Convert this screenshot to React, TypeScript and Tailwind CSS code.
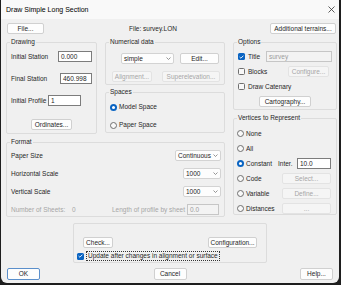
import React from 'react';

type Kids = { children?: React.ReactNode; className?: string };

function Btn({ children, className = '', disabled = false, isDefault = false }: Kids & { disabled?: boolean; isDefault?: boolean }) {
  return (
    <div
      className={`h-[11px] flex items-center justify-center rounded-[2px] border shrink-0 ${
        disabled
          ? 'bg-[#f5f5f5] border-[#e3e3e3] text-[#a6a6a6]'
          : isDefault
          ? 'bg-[#fdfdfd] border-[#5b8fcb] text-[#262626]'
          : 'bg-[#fdfdfd] border-[#d0d0d0] text-[#262626]'
      } ${className}`}
    >
      {children}
    </div>
  );
}

function Chevron() {
  return (
    <svg width="5" height="3" viewBox="0 0 5 3" className="shrink-0">
      <path d="M0.5 0.5 L2.5 2.5 L4.5 0.5" fill="none" stroke="#7a7a7a" strokeWidth="0.8" />
    </svg>
  );
}

function Select({ value, className = '' }: { value: string; className?: string }) {
  return (
    <div className={`h-[11px] flex items-center justify-between pl-[2px] pr-[2px] rounded-[2px] border border-[#d3d3d3] bg-[#fdfdfd] shrink-0 ${className}`}>
      <span className="whitespace-nowrap">{value}</span>
      <Chevron />
    </div>
  );
}

function Field({ value, className = '', disabled = false }: { value: string; className?: string; disabled?: boolean }) {
  return (
    <div
      className={`h-[11px] flex items-center pl-[2px] border shrink-0 ${
        disabled ? 'border-[#c6c6c6] bg-[#f3f3f3] text-[#9c9c9c]' : 'border-[#7c7c7c] bg-white text-[#262626]'
      } ${className}`}
    >
      {value}
    </div>
  );
}

function Check({ checked = false }: { checked?: boolean }) {
  if (checked) {
    return (
      <div className="w-[7px] h-[7px] rounded-[1.5px] bg-[#0a64c2] flex items-center justify-center shrink-0">
        <svg width="5" height="4" viewBox="0 0 5 4">
          <path d="M0.6 2 L1.9 3.2 L4.4 0.7" fill="none" stroke="white" strokeWidth="0.9" />
        </svg>
      </div>
    );
  }
  return <div className="w-[7px] h-[7px] rounded-[1.5px] border border-[#6f6f6f] bg-[#f8f8f8] shrink-0" />;
}

function Radio({ checked = false }: { checked?: boolean }) {
  if (checked) {
    return (
      <div className="w-[7px] h-[7px] rounded-full bg-[#0a64c2] flex items-center justify-center shrink-0">
        <div className="w-[3px] h-[3px] rounded-full bg-white" />
      </div>
    );
  }
  return <div className="w-[7px] h-[7px] rounded-full border border-[#6f6f6f] bg-[#f8f8f8] shrink-0" />;
}

function Group({ label, className = '', children }: Kids & { label: string }) {
  return (
    <fieldset className={`border border-[#dcdcdc] rounded-[2px] px-[4px] min-w-0 ${className}`}>
      <legend className="leading-[8px] px-[1px] -ml-[1px]">{label}</legend>
      {children}
    </fieldset>
  );
}

export default function App() {
  const vertices = ['None', 'All', 'Constant', 'Code', 'Variable', 'Distances'];

  return (
    <div className="w-[341px] h-[285px] bg-[#1e1e1e] flex font-['Liberation_Sans',Arial,sans-serif] text-[#262626]">
      <div className="w-[338px] h-[283px] ml-[1px] bg-[#f0f0f0] rounded-b-[6px] flex flex-col overflow-hidden text-[6.5px] leading-[8px]">
        {/* Title bar */}
        <div className="h-[19px] bg-[#f9f9f9] flex items-center justify-between pl-[5px] pr-[4px]">
          <span className="text-[7px] text-black">Draw Simple Long Section</span>
          <svg width="7" height="7" viewBox="0 0 7 7">
            <path d="M0.5 0.5 L6.5 6.5 M6.5 0.5 L0.5 6.5" stroke="#333" strokeWidth="0.8" />
          </svg>
        </div>

        {/* File row */}
        <div className="mt-[4px] flex items-center pl-[6px] pr-[3px]">
          <Btn className="w-[37px]">File...</Btn>
          <span className="ml-[85px]">File: survey.LON</span>
          <Btn className="w-[66px] ml-auto">Additional terrains...</Btn>
        </div>

        {/* Main area */}
        <div className="mt-[4px] flex gap-[8px] pl-[5px] pr-[2px]">
          {/* Left column */}
          <div className="w-[219px] flex flex-col">
            <div className="flex gap-[8px]">
              <Group label="Drawing" className="w-[91px] pb-[3px]">
                <div className="mt-[5px] h-[11px] flex items-center">
                  <span className="w-[47px]">Initial Station</span>
                  <Field value="0.000" className="w-[34px]" />
                </div>
                <div className="mt-[11px] h-[11px] flex items-center">
                  <span className="w-[50px]">Final Station</span>
                  <Field value="460.998" className="w-[32px]" />
                </div>
                <div className="mt-[11px] h-[11px] flex items-center">
                  <span className="w-[37px]">Initial Profile</span>
                  <Field value="1" className="w-[33px]" />
                </div>
                <div className="mt-[13px] flex justify-center">
                  <Btn className="w-[41px]">Ordinates...</Btn>
                </div>
              </Group>

              <div className="w-[120px] flex flex-col">
                <Group label="Numerical data" className="pb-[2px]">
                  <div className="mt-[7px] flex items-center">
                    <Select value="simple" className="w-[53px] ml-[11px]" />
                    <Btn className="w-[39px] ml-[6px]">Edit...</Btn>
                  </div>
                  <div className="mt-[7px] flex items-center">
                    <Btn disabled className="w-[40px] ml-[2px]">Alignment...</Btn>
                    <Btn disabled className="w-[58px] ml-[10px]">Superelevation...</Btn>
                  </div>
                </Group>
                <Group label="Spaces" className="mt-[3px] pb-[3px]">
                  <div className="mt-[7px] h-[8px] flex items-center gap-[2px]">
                    <Radio checked />
                    <span>Model Space</span>
                  </div>
                  <div className="mt-[10px] h-[8px] flex items-center gap-[2px]">
                    <Radio />
                    <span>Paper Space</span>
                  </div>
                </Group>
              </div>
            </div>

            <Group label="Format" className="mt-[4px] pb-[1px]">
              <div className="mt-[4px] h-[11px] flex items-center">
                <span>Paper Size</span>
                <Select value="Continuous" className="w-[46px] ml-auto -mr-[1px]" />
              </div>
              <div className="mt-[7px] h-[11px] flex items-center">
                <span>Horizontal Scale</span>
                <Select value="1000" className="w-[38px] ml-auto -mr-[1px]" />
              </div>
              <div className="mt-[7px] h-[11px] flex items-center">
                <span>Vertical Scale</span>
                <Select value="1000" className="w-[38px] ml-auto -mr-[1px]" />
              </div>
              <div className="mt-[7px] h-[11px] flex items-center text-[#a6a6a6]">
                <span className="w-[61px]">Number of Sheets:</span>
                <span className="w-[40px]">0</span>
                <span>Length of profile by sheet</span>
                <Field disabled value="0.0" className="w-[32px] ml-auto mr-[1px]" />
              </div>
            </Group>
          </div>

          {/* Right column */}
          <div className="w-[104px] flex flex-col">
            <Group label="Options" className="pb-[2px]">
              <div className="mt-[5px] h-[11px] flex items-center">
                <Check checked />
                <span className="ml-[3px]">Title</span>
                <Field disabled value="survey" className="w-[66px] ml-auto" />
              </div>
              <div className="mt-[4px] h-[11px] flex items-center">
                <Check />
                <span className="ml-[3px]">Blocks</span>
                <Btn disabled className="w-[41px] ml-auto mr-[3px]">Configure...</Btn>
              </div>
              <div className="mt-[4px] h-[11px] flex items-center">
                <Check />
                <span className="ml-[3px]">Draw Catenary</span>
              </div>
              <div className="mt-[4px] flex justify-center">
                <Btn className="w-[52px]">Cartography...</Btn>
              </div>
            </Group>

            <Group label="Vertices to Represent" className="mt-[4px]">
              <div className="mt-[6px] flex flex-col gap-[4px]">
                {vertices.map((v) => (
                  <div key={v} className="h-[11px] flex items-center">
                    <div className="flex items-center gap-[2px] -ml-[1px]">
                      <Radio checked={v === 'Constant'} />
                      <span>{v}</span>
                    </div>
                    {v === 'Constant' && (
                      <div className="ml-auto mr-[1px] flex items-center">
                        <span className="w-[19px]">Inter.</span>
                        <Field value="10.0" className="w-[34px]" />
                      </div>
                    )}
                    {v === 'Code' && <Btn disabled className="w-[49px] ml-auto mr-[1px]">Select...</Btn>}
                    {v === 'Variable' && <Btn disabled className="w-[49px] ml-auto mr-[1px]">Define...</Btn>}
                    {v === 'Distances' && <Btn disabled className="w-[49px] ml-auto mr-[1px]">...</Btn>}
                  </div>
                ))}
              </div>
            </Group>
          </div>
        </div>

        {/* Check / configuration group */}
        <div className="mt-[6px] ml-[72px] w-[194px] border border-[#dcdcdc] rounded-[2px] pt-[13px] pb-[1px]">
          <div className="flex items-center justify-between px-[9px]">
            <Btn className="w-[30px]">Check...</Btn>
            <Btn className="w-[49px]">Configuration...</Btn>
          </div>
          <div className="mt-[3px] h-[10px] flex items-center pl-[3px]">
            <Check checked />
            <span className="ml-[2px] h-[10px] px-[1px] flex items-center border border-dotted border-[#333]">
              Update after changes in alignment or surface
            </span>
          </div>
        </div>

        {/* Dialog buttons */}
        <div className="mt-[5px] flex items-center justify-between px-[6px]">
          <Btn isDefault className="w-[33px] h-[12px]">OK</Btn>
          <Btn className="w-[33px] h-[12px]">Cancel</Btn>
          <Btn className="w-[33px] h-[12px]">Help...</Btn>
        </div>
      </div>
    </div>
  );
}
